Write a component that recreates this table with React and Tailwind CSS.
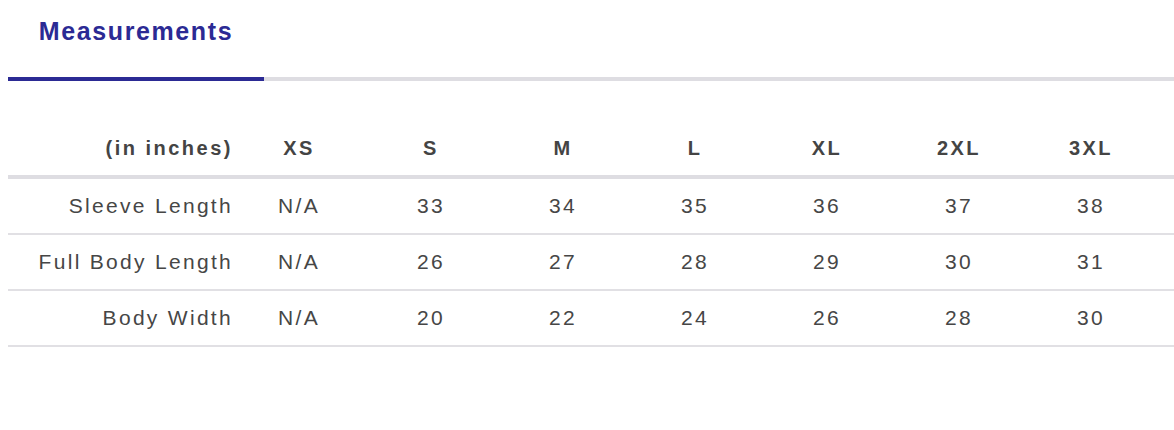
import React from "react";

const sizes = ["XS", "S", "M", "L", "XL", "2XL", "3XL"];

const rows = [
  { label: "Sleeve Length", values: ["N/A", "33", "34", "35", "36", "37", "38"] },
  { label: "Full Body Length", values: ["N/A", "26", "27", "28", "29", "30", "31"] },
  { label: "Body Width", values: ["N/A", "20", "22", "24", "26", "28", "30"] },
];

const App = () => {
  return (
    <div className="min-h-[430px] bg-white pl-2 font-['Liberation_Sans',Arial,sans-serif] text-[#464646]">
      {/* Tabs */}
      <div className="flex border-b-4 border-[#dedde2]">
        <div className="-mb-1 flex h-[81px] w-[256px] items-center justify-center border-b-4 border-[#2b2a94] pb-[13px]">
          <span className="text-[25px] font-bold tracking-[1.6px] text-[#2b2a94]">Measurements</span>
        </div>
      </div>

      {/* Size table */}
      <div className="mt-[39px]">
        <div className="grid h-[59px] grid-cols-[225px_repeat(7,132px)] items-center border-b-4 border-[#dedde2] pt-[1px] text-[20px] font-bold tracking-[2.5px] text-[#444]">
          <div className="text-right">(in inches)</div>
          {sizes.map((size) => (
            <div key={size} className="text-center">
              {size}
            </div>
          ))}
        </div>
        {rows.map((row) => (
          <div
            key={row.label}
            className="grid h-[56px] grid-cols-[225px_repeat(7,132px)] items-center border-b-2 border-[#e1e0e4] text-[21px] tracking-[2.3px]"
          >
            <div className="text-right">{row.label}</div>
            {row.values.map((value, index) => (
              <div key={index} className="text-center">
                {value}
              </div>
            ))}
          </div>
        ))}
      </div>
    </div>
  );
};

export default App;
